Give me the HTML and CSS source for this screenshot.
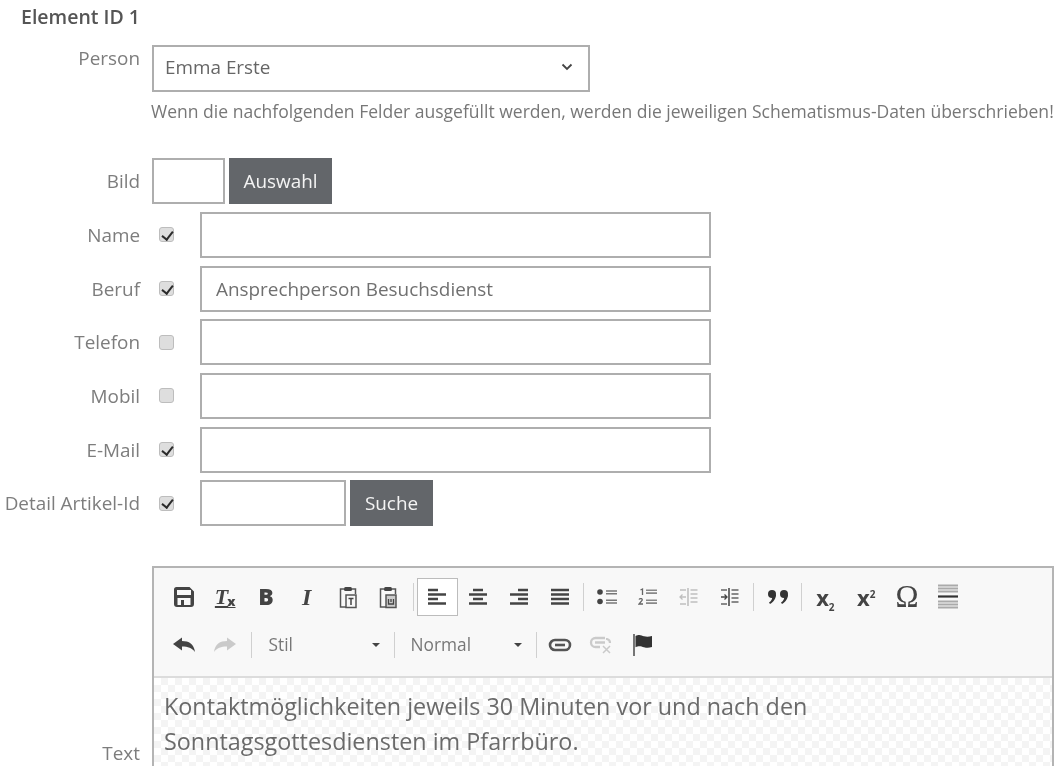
FILE: index.html
```html
<!DOCTYPE html>
<html lang="de">
<head>
<meta charset="utf-8">
<title>Element ID 1</title>
<link rel="stylesheet" href="styles.css">
</head>
<body>
<main class="page">
  <h2 class="title">Element ID 1</h2>
  <div class="row person-row">
    <label class="label label-top">Person</label>
    <div class="select"><span>Emma Erste</span>
      <svg class="chevron" width="12" height="8" viewBox="0 0 12 8"><path d="M1.500 1.500 6 6l4.500-4.500" fill="none" stroke="#444" stroke-width="1.800"/></svg>
    </div>
  </div>
  <p class="note">Wenn die nachfolgenden Felder ausgefüllt werden, werden die jeweiligen Schematismus-Daten überschrieben!</p>

  <div class="fields">
    <div class="row field">
      <label class="label">Bild</label>
      <div class="controls"><input class="input input-img" type="text"><button class="btn btn-auswahl">Auswahl</button></div>
    </div>
    <div class="row field">
      <label class="label">Name</label>
      <div class="controls"><span class="check-cell"><input class="check" type="checkbox" checked></span><input class="input input-wide" type="text"></div>
    </div>
    <div class="row field">
      <label class="label">Beruf</label>
      <div class="controls"><span class="check-cell"><input class="check" type="checkbox" checked></span><input class="input input-wide" type="text" value="Ansprechperson Besuchsdienst"></div>
    </div>
    <div class="row field">
      <label class="label">Telefon</label>
      <div class="controls"><span class="check-cell"><input class="check" type="checkbox"></span><input class="input input-wide" type="text"></div>
    </div>
    <div class="row field">
      <label class="label">Mobil</label>
      <div class="controls"><span class="check-cell"><input class="check" type="checkbox"></span><input class="input input-wide" type="text"></div>
    </div>
    <div class="row field">
      <label class="label">E-Mail</label>
      <div class="controls"><span class="check-cell"><input class="check" type="checkbox" checked></span><input class="input input-wide" type="text"></div>
    </div>
    <div class="row field">
      <label class="label">Detail Artikel-Id</label>
      <div class="controls"><span class="check-cell"><input class="check" type="checkbox" checked></span><input class="input input-id" type="text"><button class="btn btn-suche">Suche</button></div>
    </div>
  </div>

  <div class="row editor-row">
    <label class="label">Text</label>
    <div class="editor">
      <div class="toolbar">
        <div class="tb-line">
          <span class="tb"><svg width="24" height="24" viewBox="0 0 24 24"><path d="M4.500 2h13L22 6.500V19a3 3 0 0 1-3 3H5a3 3 0 0 1-3-3V4.500A2.500 2.500 0 0 1 4.500 2Z" fill="#444"/><rect x="5" y="5" width="14" height="5" fill="#f8f8f8"/><rect x="5.500" y="13" width="13" height="7" fill="#f8f8f8"/><rect x="9" y="15" width="3" height="5" fill="#444"/></svg></span>
          <span class="tb tb-text tb-clear"><i>T</i><b>x</b></span>
          <span class="tb tb-text tb-bold">B</span>
          <span class="tb tb-text tb-italic">I</span>
          <span class="tb"><svg width="24" height="24" viewBox="0 0 24 24"><path d="M8 4H4.500v18H10M16 4h3.500v5" fill="none" stroke="#555" stroke-width="1.500"/><rect x="8" y="2" width="8" height="4" rx="1.500" fill="#444"/><rect x="10" y="10" width="10" height="12.500" fill="#f8f8f8" stroke="#555" stroke-width="1.500"/><path d="M12.500 13.500h5M15 13.500V20" stroke="#444" stroke-width="1.500"/></svg></span>
          <span class="tb"><svg width="24" height="24" viewBox="0 0 24 24"><path d="M8 4H4.500v18H10M16 4h3.500v5" fill="none" stroke="#555" stroke-width="1.500"/><rect x="8" y="2" width="8" height="4" rx="1.500" fill="#444"/><rect x="10" y="10" width="10" height="12.500" fill="#ccc" stroke="#555" stroke-width="1.500"/><path d="M12.500 14v5h5v-5M15 14v3" fill="none" stroke="#444" stroke-width="1.300"/></svg></span>
          <span class="sep sep-wide"></span>
          <span class="tb tb-active"><svg width="18" height="18" viewBox="0 0 18 18"><path d="M0 2h10M0 6.500h18M0 11h10M0 15.500h18" stroke="#444" stroke-width="2.400"/></svg></span>
          <span class="tb"><svg width="18" height="18" viewBox="0 0 18 18"><path d="M4 2h10M0 6.500h18M4 11h10M0 15.500h18" stroke="#444" stroke-width="2.400"/></svg></span>
          <span class="tb"><svg width="18" height="18" viewBox="0 0 18 18"><path d="M8 2h10M0 6.500h18M8 11h10M0 15.500h18" stroke="#444" stroke-width="2.400"/></svg></span>
          <span class="tb"><svg width="18" height="18" viewBox="0 0 18 18"><path d="M0 2h18M0 6.500h18M0 11h18M0 15.500h18" stroke="#444" stroke-width="2.400"/></svg></span>
          <span class="sep"></span>
          <span class="tb"><svg width="20" height="18" viewBox="0 0 20 18"><circle cx="3" cy="4" r="2.800" fill="#444"/><circle cx="3" cy="13.500" r="2.800" fill="#444"/><path d="M9 3h11M9 5.800h11M9 12.200h11M9 15h11" stroke="#777" stroke-width="1.600"/></svg></span>
          <span class="tb"><svg width="20" height="20" viewBox="0 0 20 20"><path d="M2.500 3l2-1v6M1 12.500c1-1.500 4-1 3 1L1 17h4" fill="none" stroke="#666" stroke-width="1.300"/><path d="M8 3.300h11M8 6.100h11M8 13.300h11M8 16.100h11" stroke="#888" stroke-width="1.600"/></svg></span>
          <span class="tb tb-off"><svg width="20" height="20" viewBox="0 0 20 20"><path d="M1 10h6M3.500 7.500 1 10l2.500 2.500" fill="none" stroke="#555" stroke-width="1.300"/><path d="M9 1v18" stroke="#444" stroke-width="1.400"/><path d="M11.500 3h7M11.500 7h7M11.500 11h7M11.500 15h7M1 3h6M1 17h6" stroke="#555" stroke-width="1.500"/></svg></span>
          <span class="tb"><svg width="20" height="20" viewBox="0 0 20 20"><path d="M1 10h6M4.500 7.500 7 10l-2.500 2.500" fill="none" stroke="#444" stroke-width="1.300"/><path d="M9 1v18" stroke="#333" stroke-width="1.400"/><path d="M11.500 3h7M11.500 7h7M11.500 11h7M11.500 15h7M1 3h6M1 17h6" stroke="#666" stroke-width="1.500"/></svg></span>
          <span class="sep"></span>
          <span class="tb"><svg width="22" height="18" viewBox="0 0 22 18"><circle cx="5" cy="6" r="4" fill="#333"/><path d="M9 6.500c0 4-2.500 7.500-6 9.500l-1-1.400C4.500 13 5.800 10 5 8Z" fill="#333"/><circle cx="17" cy="6" r="4" fill="#333"/><path d="M21 6.500c0 4-2.500 7.500-6 9.500l-1-1.400c2.500-1.600 3.800-4.600 3-6.600Z" fill="#333"/></svg></span>
          <span class="sep"></span>
          <span class="tb tb-text tb-script"><span>x<sub>2</sub></span></span>
          <span class="tb tb-text tb-script"><span>x<sup>2</sup></span></span>
          <span class="tb tb-text tb-omega">Ω</span>
          <span class="tb"><svg width="22" height="26" viewBox="0 0 22 26"><path d="M1 1.500h20M1 4.500h20M1 7.500h20M1 17.500h20M1 20.500h20M1 23.500h20" stroke="#aaa" stroke-width="1.800"/><path d="M1 12.500h20" stroke="#333" stroke-width="2.200"/></svg></span>
        </div>
        <div class="tb-line">
          <span class="tb"><svg width="24" height="18" viewBox="0 0 24 18"><path d="M1 8 10 1.500V5c7 0 12 3 13 11-3-4-7-5.500-13-5.500v4Z" fill="#444"/></svg></span>
          <span class="tb tb-off"><svg width="24" height="18" viewBox="0 0 24 18"><path d="M23 8 14 1.500V5C7 5 2 8 1 16c3-4 7-5.500 13-5.500v4Z" fill="#777"/></svg></span>
          <span class="sep sep-tall sep-first"></span>
          <span class="combo combo-style"><span>Stil</span><i class="caret"></i></span>
          <span class="sep sep-tall"></span>
          <span class="combo combo-format"><span>Normal</span><i class="caret"></i></span>
          <span class="sep sep-tall"></span>
          <span class="tb"><svg width="24" height="14" viewBox="0 0 24 14"><rect x="2" y="2" width="20" height="10" rx="5" fill="none" stroke="#555" stroke-width="2.600"/><path d="M7 7h10" stroke="#555" stroke-width="2.600"/></svg></span>
          <span class="tb tb-off"><svg width="24" height="20" viewBox="0 0 24 20"><path d="M16 3H6.500a4.500 4.500 0 0 0 0 9H11M6 7.500h10" fill="none" stroke="#777" stroke-width="2.300"/><path d="M14 11l7 7M21 11l-7 7" stroke="#777" stroke-width="1.500"/><path d="M17 4h1a4 4 0 0 1 3 4" fill="none" stroke="#777" stroke-width="2.200"/></svg></span>
          <span class="tb tb-flag"><svg width="22" height="24" viewBox="0 0 22 24"><path d="M2 1v22" stroke="#666" stroke-width="1.800"/><path d="M3.500 3c4-2 6-.5 8.500.3 3 .8 5 .5 8-.3v11c-3 1-5 1.100-8 .2-3-.9-5-1.700-8.500 0Z" fill="#333"/></svg></span>
        </div>
      </div>
      <div class="content">
        <p>Kontaktmöglichkeiten jeweils 30 Minuten vor und nach den Sonntagsgottesdiensten im Pfarrbüro.</p>
      </div>
    </div>
  </div>
</main>
</body>
</html>
```

FILE: styles.css
```css
* { box-sizing: border-box; }
html, body { margin: 0; height: 100%; overflow: hidden; background: #fff; }
body { font-family: "Open Sans", sans-serif; font-size: 18.9px; color: #6f6f6f; }
.page { padding: 6px 4px 0 0; width: 1058px; filter: blur(0.35px); }
.title { margin: 0 0 0 21px; height: 39px; font-size: 19.5px; line-height: 22px; font-weight: 600; color: #555; white-space: nowrap; }
.row { display: grid; grid-template-columns: 140px 1fr; column-gap: 12px; align-items: center; }
.label { text-align: right; white-space: nowrap; font-size: 18.9px; color: #7d7d7d; }
.person-row { align-items: start; }
.label-top { line-height: 26px; }
.select { display: flex; align-items: center; justify-content: space-between; width: 438px; height: 47px; padding: 0 15px 3px 11px; border: 2px solid #aeaeae; background: #fff; color: #666; }
.note { margin: 7px 0 0 151px; height: 40.2px; line-height: 24px; font-size: 17.55px; color: #777; white-space: nowrap; }
.fields { display: flex; flex-direction: column; row-gap: 7.7px; margin-top: 19px; }
.field { height: 46px; }
.controls { display: flex; align-items: stretch; height: 46px; }
.input { height: 100%; border: 2px solid #aeaeae; background: #fff; padding: 0 14px; font: inherit; color: #707070; outline: none; border-radius: 0; }
.input-img { width: 73px; }
.input-wide { width: 511px; }
.input-id { width: 146px; }
.btn { border: 0; background: #63666a; color: #f4f4f4; font: inherit; padding: 0; }
.btn-auswahl { width: 103px; margin-left: 4px; }
.btn-suche { width: 83px; margin-left: 4px; }
.check-cell { display: flex; align-items: center; width: 48px; padding-left: 7px; }
.check { appearance: none; position: relative; width: 15px; height: 15px; margin: 0; background: #dedede; border: 1px solid #bdbdbd; border-radius: 3px; }
.check:checked::after { content: ""; position: absolute; left: 3.5px; top: 0.5px; width: 5px; height: 9px; border: solid #2b2b2b; border-width: 0 2.5px 2.5px 0; transform: rotate(38deg); }
.editor-row { margin-top: 39.6px; }
.editor { width: 902px; height: 374px; border: 2px solid #b4b4b4; }
.toolbar { height: 110px; padding: 5px 0 0 10px; background: #f8f8f8; border-bottom: 2px solid #dcdcdc; }
.tb-line { display: flex; align-items: center; height: 48px; }
.tb { display: flex; flex: none; align-items: center; justify-content: center; width: 40.8px; height: 38px; }
.tb-active { background: #fff; border: 1px solid #bcbcbc; }
.tb-off { opacity: 0.35; }
.tb-flag { margin-left: 1px; }
.tb-text { color: #444; line-height: 1; }
.tb-bold { font-family: "Open Sans", sans-serif; font-weight: 800; font-size: 23px; }
.tb-italic { font-family: "Liberation Serif", serif; font-style: italic; font-weight: 700; font-size: 24px; }
.tb-clear { font-family: "Liberation Serif", serif; font-size: 22px; font-weight: 700; text-decoration: underline; }
.tb-clear b { font-family: "Open Sans", sans-serif; font-size: 13px; align-self: flex-end; margin: 0 0 8px -1px; }
.tb-script { font-family: "Open Sans", sans-serif; font-weight: 700; font-size: 22px; }
.tb-script sub, .tb-script sup { font-size: 10px; line-height: 0; }
.tb-omega { font-family: "Liberation Serif", serif; font-size: 31px; color: #444; }
.sep { flex: none; width: 1px; height: 28px; margin: 0 3px; background: #d0d0d0; }
.sep-wide { margin: 0 3px 0 4px; }
.sep-tall { height: 26px; }
.sep-first { margin-left: 5px; }
.combo { display: flex; flex: none; align-items: center; justify-content: space-between; height: 30px; font-size: 17.3px; color: #777; }
.combo-style { width: 136px; padding: 0 10.5px 0 14px; }
.combo-format { width: 135px; padding: 0 10.5px 0 13px; }
.caret { width: 0; height: 0; border: 4.5px solid transparent; border-top-color: #444; border-bottom-width: 0; }
.content {
  height: 262px;
  padding: 11px 10px;
  background-color: #fff;
  background-image: repeating-conic-gradient(#f4f4f4 0 25%, #fff 0 50%);
  background-size: 14px 14px;
}
.content p { margin: 0; width: 760px; font-size: 23.35px; line-height: 35px; color: #6a6a6a; }
```
